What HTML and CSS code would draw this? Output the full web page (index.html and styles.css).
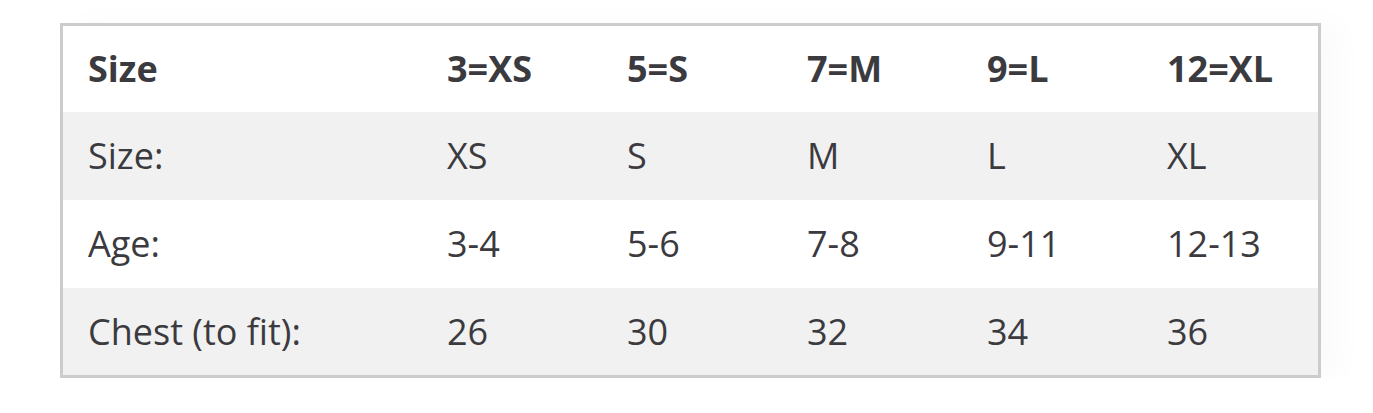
FILE: index.html
```html
<!DOCTYPE html>
<html lang="en">
<head>
<meta charset="utf-8">
<title>Size chart</title>
<link rel="stylesheet" href="styles.css">
</head>
<body>
<div class="wrap">
  <table class="size-table">
    <colgroup>
      <col class="c-label">
      <col class="c-val">
      <col class="c-val">
      <col class="c-val">
      <col class="c-val">
      <col class="c-last">
    </colgroup>
    <thead>
      <tr class="row-head">
        <th>Size</th><th>3=XS</th><th>5=S</th><th>7=M</th><th>9=L</th><th>12=XL</th>
      </tr>
    </thead>
    <tbody>
      <tr class="row-alt">
        <td>Size:</td><td>XS</td><td>S</td><td>M</td><td>L</td><td>XL</td>
      </tr>
      <tr class="row-plain">
        <td>Age:</td><td>3-4</td><td>5-6</td><td>7-8</td><td>9-11</td><td>12-13</td>
      </tr>
      <tr class="row-alt row-last">
        <td>Chest (to fit):</td><td>26</td><td>30</td><td>32</td><td>34</td><td>36</td>
      </tr>
    </tbody>
  </table>
</div>
</body>
</html>
```
FILE: styles.css
```css
html, body {
  margin: 0;
  padding: 0;
  background: #ffffff;
}
.wrap {
  padding: 23px 0 0 60px;
}
.size-table {
  border: 3px solid #cccccc;
  border-collapse: separate;
  border-spacing: 0;
  table-layout: fixed;
  width: 1261px;
  font-family: "Open Sans", "Liberation Sans", sans-serif;
  font-size: 36px;
  color: #3b3a3e;
  box-shadow: 18px 0 30px rgba(0, 0, 0, 0.025);
}
.c-label { width: 359px; }
.c-val { width: 180px; }
.c-last { width: 176px; }
.size-table th,
.size-table td {
  text-align: left;
  padding: 0 0 0 25px;
  white-space: nowrap;
  vertical-align: middle;
  line-height: 40px;
}
.size-table th {
  font-weight: 700;
}
.size-table td {
  font-weight: 400;
}
.row-head { height: 86px; background: #ffffff; }
.row-alt { background: #f1f1f1; }
.row-plain { background: #ffffff; }
tbody tr { height: 88px; }
tbody tr.row-last { height: 87px; }
```
